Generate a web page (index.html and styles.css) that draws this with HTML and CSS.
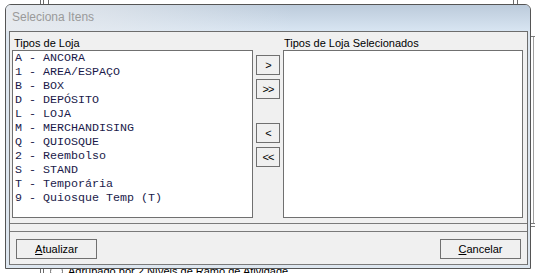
FILE: index.html
```html
<!DOCTYPE html>
<html lang="pt">
  <head>
    <meta charset="UTF-8" />
    <title>Seleciona Itens</title>
    <meta name="viewport" content="width=device-width, initial-scale=1.0" />
    <link rel="stylesheet" href="styles.css">
  </head>
  <body>
    <!-- parts of the main form showing around the dialog -->
    <div class="backdrop">
      <span class="bd-vline bd-v1"></span>
      <span class="bd-vline bd-v2"></span>
      <span class="bd-vline bd-v3"></span>
      <span class="bd-vline bd-v4"></span>
      <span class="bd-vline bd-v5"></span>
      <span class="bd-vline bd-v6"></span>
      <span class="bd-hline bd-h1"></span>
      <span class="bd-hline bd-h2"></span>
      <span class="bd-hline bd-h3"></span>
      <div class="bd-option"><span class="bd-radio"></span>Agrupado por 2 Níveis de Ramo de Atividade</div>
    </div>

    <div class="window">
      <div class="titlebar">Seleciona Itens</div>

      <div class="client">
        <div class="top-panel">
          <div class="col col-left">
            <div class="label">Tipos de Loja</div>
            <ul class="listbox">
              <li>A - ANCORA</li>
              <li>1 - AREA/ESPAÇO</li>
              <li>B - BOX</li>
              <li>D - DEPÓSITO</li>
              <li>L - LOJA</li>
              <li>M - MERCHANDISING</li>
              <li>Q - QUIOSQUE</li>
              <li>2 - Reembolso</li>
              <li>S - STAND</li>
              <li>T - Temporária</li>
              <li>9 - Quiosque Temp (T)</li>
            </ul>
          </div>

          <div class="move-buttons">
            <button class="btn-move">&gt;</button>
            <button class="btn-move">&gt;&gt;</button>
            <button class="btn-move btn-back">&lt;</button>
            <button class="btn-move">&lt;&lt;</button>
          </div>

          <div class="col col-right">
            <div class="label">Tipos de Loja Selecionados</div>
            <ul class="listbox"></ul>
          </div>
        </div>

        <div class="bottom-panel">
          <button class="btn"><u>A</u>tualizar</button>
          <button class="btn"><u>C</u>ancelar</button>
        </div>
      </div>
    </div>
  </body>
</html>
```

FILE: styles.css
```css
body {
  margin: 0;
  padding: 4px 0 0 5px;
  width: 535px;
  height: 273px;
  box-sizing: border-box;
  position: relative;
  overflow: hidden;
  background: #fff;
  font-family: "Liberation Sans", Arial, sans-serif;
  font-size: 11px;
  color: #000;
}

/* backdrop */

.backdrop {
  position: absolute;
  top: 0;
  left: 0;
  width: 535px;
  height: 273px;
}

.bd-vline {
  position: absolute;
  top: 0;
  width: 1px;
  height: 273px;
  background: #6a6a6a;
}

.bd-v1 { left: 40px; }
.bd-v2 { left: 43px; }
.bd-v3 { left: 48px; height: 5px; }
.bd-v4 { left: 513px; height: 5px; }
.bd-v5 { left: 517px; height: 5px; }
.bd-v6 { left: 533px; top: 36px; height: 188px; background: #a0a0a0; }

.bd-hline {
  position: absolute;
  left: 531px;
  width: 4px;
  height: 1px;
  background: #7a7a7a;
}

.bd-h1 { top: 36px; }
.bd-h2 { top: 223px; }
.bd-h3 { top: 226px; }

.bd-option {
  position: absolute;
  left: 50px;
  top: 265px;
  display: flex;
  align-items: center;
  gap: 5px;
  line-height: 13px;
  white-space: nowrap;
}

.bd-radio {
  width: 11px;
  height: 11px;
  border: 1px solid #6a6a6a;
  border-radius: 50%;
  background: #fff;
}

/* dialog */

.window {
  position: relative;
  width: 526px;
  height: 265px;
  box-sizing: border-box;
  border: 1px solid #555;
  border-radius: 6px 6px 0 0;
  background: #dde6ef;
  overflow: hidden;
}

.titlebar {
  height: 26px;
  line-height: 25px;
  padding-left: 6px;
  font-size: 12px;
  color: #9a9a9a;
  background:
    linear-gradient(to right, rgba(232, 235, 239, 0.95), rgba(232, 235, 239, 0) 55%),
    linear-gradient(to bottom, #bccbdb, #d8e5f2);
}

.client {
  margin: 0 2px 3px 3px;
  border: 1px solid #6d6d6d;
  border-bottom: none;
  background: #f0f0f0;
  height: 234px;
  box-sizing: border-box;
}

.top-panel {
  display: flex;
  padding: 4px 4px 5px 2px;
  border-bottom: 1px solid #7a7a7a;
}

.col-left {
  width: 241px;
}

.col-right {
  width: 240px;
}

.label {
  height: 14px;
  line-height: 14px;
  padding-left: 1px;
  white-space: nowrap;
}

.col-left .label {
  padding-left: 2px;
}

.listbox {
  list-style: none;
  margin: 0;
  padding: 0 0 0 2px;
  height: 168px;
  box-sizing: border-box;
  border: 1px solid #707070;
  background: #fff;
  font-family: "Liberation Mono", "Courier New", monospace;
  font-size: 11.67px;
  line-height: 14px;
  color: #1a1a4a;
}

.listbox li {
  white-space: pre;
}

.move-buttons {
  width: 30px;
  display: flex;
  flex-direction: column;
  padding-top: 19px;
  gap: 4px;
}

.btn-move,
.btn {
  margin: 0;
  padding: 0;
  border: 1px solid #707070;
  background: #f0f0f0;
  font-family: "Liberation Sans", Arial, sans-serif;
  font-size: 11px;
  color: #000;
}

.btn-move {
  width: 24px;
  height: 20px;
  margin-left: 3px;
  line-height: 17px;
  letter-spacing: -1px;
}

.btn-back {
  margin-top: 20px;
}

.bottom-panel {
  display: flex;
  justify-content: space-between;
  margin-top: 7px;
  height: 34px;
  box-sizing: border-box;
  padding: 7px 6px 0 6px;
  border-top: 1px solid #7a7a7a;
  border-bottom: 1px solid #7a7a7a;
}

.btn {
  width: 81px;
  height: 20px;
}
```
